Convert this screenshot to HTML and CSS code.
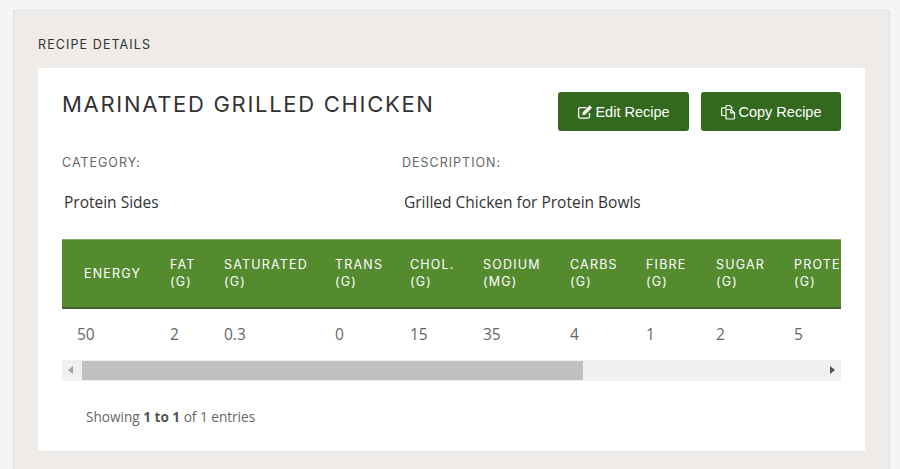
FILE: index.html
```html
<!DOCTYPE html>
<html lang="en">
<head>
<meta charset="utf-8">
<title>Recipe Details</title>
<link rel="stylesheet" href="styles.css">
</head>
<body>
<section class="panel">
  <h2 class="panel-title">RECIPE DETAILS</h2>
  <div class="card">
    <div class="card-head">
      <h1 class="recipe-name">MARINATED GRILLED CHICKEN</h1>
      <div class="actions">
        <a class="btn btn-edit"><svg class="icon" viewBox="0 0 16 16" fill="none" stroke="#fff" stroke-width="1.3"><path d="M12.5 9v3.5a1.6 1.6 0 0 1-1.6 1.6H3.2a1.6 1.6 0 0 1-1.6-1.6V5.2a1.6 1.6 0 0 1 1.6-1.6h6"/><path d="M6.2 8.2 12.6 1.8l2 2-6.4 6.4-2.5.5z" fill="#fff" stroke-width=".8"/></svg>Edit Recipe</a>
        <a class="btn btn-copy"><svg class="icon" viewBox="0 0 16 16" fill="none" stroke="#fff" stroke-width="1.2"><path d="M6 4.5V2.2c0-.4.3-.7.7-.7h3l2.3 2.3v1"/><path d="M6 11.5H2.3c-.4 0-.7-.3-.7-.7V4.5c0-.4.3-.7.7-.7H6"/><path d="M6.2 5.5h5l3.3 3.2v5.6c0 .4-.3.7-.7.7H6.7c-.4 0-.7-.3-.7-.7V5.9c0-.2 0-.4.2-.4z"/><path d="M10.8 5.5v3.3h3.7"/></svg>Copy Recipe</a>
      </div>
    </div>
    <div class="meta">
      <div class="meta-item meta-category">
        <div class="meta-label">CATEGORY:</div>
        <div class="meta-value">Protein Sides</div>
      </div>
      <div class="meta-item">
        <div class="meta-label">DESCRIPTION:</div>
        <div class="meta-value">Grilled Chicken for Protein Bowls</div>
      </div>
    </div>
    <div class="table-scroll">
      <table class="nutrition">
        <colgroup>
          <col class="c1"><col class="c2"><col class="c3"><col class="c4"><col class="c5"><col class="c6"><col class="c7"><col class="c8"><col class="c9"><col class="c10">
        </colgroup>
        <thead>
          <tr>
            <th class="th-energy">ENERGY</th>
            <th>FAT<br>(G)</th>
            <th>SATURATED<br>(G)</th>
            <th>TRANS<br>(G)</th>
            <th>CHOL.<br>(G)</th>
            <th>SODIUM<br>(MG)</th>
            <th>CARBS<br>(G)</th>
            <th>FIBRE<br>(G)</th>
            <th>SUGAR<br>(G)</th>
            <th>PROTEIN<br>(G)</th>
          </tr>
        </thead>
        <tbody>
          <tr>
            <td>50</td><td>2</td><td>0.3</td><td>0</td><td>15</td><td>35</td><td>4</td><td>1</td><td>2</td><td>5</td>
          </tr>
        </tbody>
      </table>
    </div>
    <div class="scrollbar">
      <span class="arrow arrow-left"></span>
      <span class="thumb"></span>
      <span class="arrow arrow-right"></span>
    </div>
    <div class="info">Showing <strong>1 to 1</strong> of 1 entries</div>
  </div>
</section>
</body>
</html>
```
FILE: styles.css
```css
* { box-sizing: border-box; }
html, body { margin: 0; height: 469px; overflow: hidden; }
body {
  background: #f5f5f5;
  padding: 10px 10px 0 13px;
  font-family: "Open Sans", "Noto Sans", sans-serif;
  color: #555;
}
.panel {
  height: 470px;
  background: #efebe8;
  border: 1px solid #e0e0e0;
  padding: 25px 24px 0;
}
.panel-title {
  margin: 0;
  height: 32px;
  padding-top: 1px;
  font: 400 12.5px/16px Inter, sans-serif;
  letter-spacing: 1.1px;
  color: #333;
}
.card {
  background: #fff;
  height: 384px;
  padding: 24px 24px 0;
  border-bottom: 1px solid #e8e8e8;
}
.card-head {
  display: flex;
  justify-content: space-between;
  height: 55px;
}
.recipe-name {
  margin: 0;
  font: 400 22px/24px Inter, sans-serif;
  letter-spacing: 1.7px;
  color: #333;
}
.actions { display: flex; gap: 12px; }
.btn {
  display: flex;
  align-items: center;
  justify-content: center;
  gap: 2px;
  height: 39px;
  background: #33691e;
  border-radius: 3px;
  color: #fff;
  font: 400 14.5px/20px "Liberation Sans", Arial, sans-serif;
}
.btn-edit { width: 131px; }
.btn-copy { width: 140px; }
.icon { width: 16px; height: 16px; }
.meta { display: flex; margin-top: 8px; height: 84px; }
.meta-category { width: 340px; }
.meta-label {
  font: 400 12.5px/16px Inter, sans-serif;
  letter-spacing: 1px;
  color: #666;
}
.meta-value {
  margin-top: 21px;
  padding-left: 2px;
  font-size: 15.5px;
  line-height: 20px;
  color: #333;
}
.table-scroll { overflow: hidden; width: 779px; }
.nutrition {
  border-collapse: collapse;
  table-layout: fixed;
  width: 860px;
}
.c1 { width: 93px; }
.c2 { width: 54px; }
.c3 { width: 111px; }
.c4 { width: 75px; }
.c5 { width: 73px; }
.c6 { width: 87px; }
.c7 { width: 76px; }
.c8 { width: 70px; }
.c9 { width: 78px; }
.c10 { width: 143px; }
.nutrition th {
  height: 68px;
  padding: 0 0 0 15px;
  background: #558b2f;
  border-top: 1px solid #88ad6e;
  border-bottom: 2px solid #44602f;
  color: #fff;
  text-align: left;
  white-space: nowrap;
  font: 400 12.5px/17.5px Inter, sans-serif;
  letter-spacing: 1.2px;
}
.nutrition .th-energy { padding-left: 22px; }
.nutrition td {
  height: 52px;
  padding: 0 0 0 15px;
  font-size: 15.5px;
  color: #666;
}
.scrollbar {
  display: flex;
  align-items: center;
  width: 779px;
  height: 21px;
  background: #f0f0f0;
}
.thumb {
  display: block;
  width: 501px;
  height: 19px;
  margin-left: 9px;
  background: #c0c0c0;
}
.arrow { display: block; width: 0; height: 0; border-style: solid; border-color: transparent; }
.arrow-left { margin-left: 6px; border-width: 4.5px 5px 4.5px 0; border-right-color: #a3a3a3; }
.arrow-right { margin-left: auto; margin-right: 6px; border-width: 4.5px 0 4.5px 5px; border-left-color: #505050; }
.info {
  margin-top: 26px;
  padding-left: 24px;
  font-size: 13.6px;
  line-height: 20px;
  color: #666;
}
.info strong { font-weight: 700; color: #555; }
```
